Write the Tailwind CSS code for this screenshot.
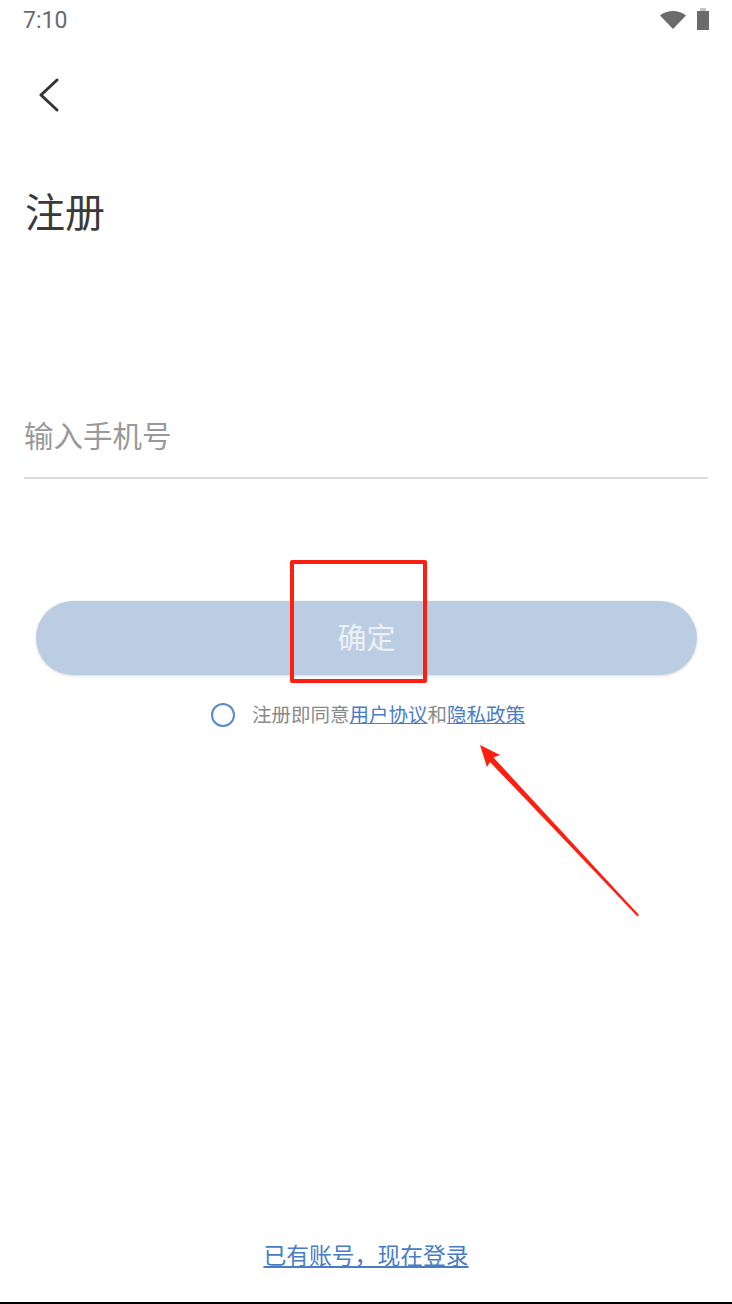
<!DOCTYPE html>
<html lang="zh-CN">
<head>
  <meta charset="UTF-8">
  <meta name="viewport" content="width=device-width, initial-scale=1.0">
  <title>注册</title>
  <script src="https://cdn.jsdelivr.net/npm/@tailwindcss/browser@4"></script>
</head>
<body class="bg-white">
  <div class="relative h-[1304px] w-[732px] overflow-hidden flex flex-col font-['Roboto','Noto_Sans_CJK_SC',sans-serif] border-b-2 border-black">
    <!-- Status bar -->
    <div class="h-[38px] flex items-center justify-between pl-[23px] pr-[23px] pt-[2px] shrink-0">
      <span class="text-[23px] leading-none font-['Roboto',sans-serif] text-[#6b6b6b]">7:10</span>
      <div class="flex items-center gap-[11px] -mt-[2px]">
        <svg width="26" height="20" viewBox="0 0 26 20"><path d="M0 6.500C3.500 3.500 8 2 13 2s9.500 1.500 13 4.500L13 20z" fill="#6b6b6b"/></svg>
        <svg width="12" height="22" viewBox="0 0 12 22"><rect x="3" y="0" width="6" height="3" fill="#c4c4c4"/><rect x="0" y="3" width="12" height="19" fill="#6b6b6b"/></svg>
      </div>
    </div>
    <!-- Back -->
    <div class="h-[116px] shrink-0 pl-[39px] pt-[40px]">
      <svg width="20" height="34" viewBox="0 0 20 34" fill="none"><path d="M18 2 2 17l16 15" stroke="#333" stroke-width="3" stroke-linecap="round" stroke-linejoin="round"/></svg>
    </div>
    <!-- Title -->
    <h1 class="pl-[25px] text-[40px] leading-[48px] text-[#3a3a3a] font-normal shrink-0 mt-[36px]">注册</h1>
    <!-- Phone input -->
    <div class="mx-[24px] mt-[179px] h-[62px] border-b-2 border-[#dcdcdc] shrink-0 flex items-start">
      <span class="text-[29.500px] leading-[40px] text-[#999]">输入手机号</span>
    </div>
    <!-- Submit -->
    <div class="ml-[36px] mr-[35px] mt-[122px] h-[74px] rounded-full bg-[#bbcde3] shadow-[0_1px_3px_rgba(0,0,0,0.15)] flex items-center justify-center pt-[3px] text-[29px] text-[#edf0f5] shrink-0">确定</div>
    <!-- Agreement -->
    <div class="mt-[27px] flex items-center justify-center pl-[4px] shrink-0">
      <span class="w-[24px] h-[24px] -mt-[1px] rounded-full border-2 border-[#5a88cb] mr-[17px]"></span>
      <span class="text-[19.500px] leading-[26px] pt-[1px] text-[#8a8a8a]">注册即同意<span class="text-[#4a7cc4] underline">用户协议</span>和<span class="text-[#4a7cc4] underline">隐私政策</span></span>
    </div>
    <!-- Login link -->
    <div class="mt-auto mb-[29px] text-center shrink-0">
      <span class="text-[22.800px] leading-[32px] text-[#4a7cc4] underline">已有账号，现在登录</span>
    </div>
    <!-- Red annotations over the screenshot -->
    <div class="absolute left-[290px] top-[560px] w-[137px] h-[123px] border-[4px] border-[#ff1f11] rounded-[2px]"></div>
    <svg class="absolute left-[470px] top-[735px]" width="180" height="190" viewBox="470 735 180 190">
      <polygon points="480,745 500,755 493.500,757.500 639,915 637.500,916.500 490,762 487,767" fill="#ff1f11"/>
    </svg>
  </div>
</body>
</html>
